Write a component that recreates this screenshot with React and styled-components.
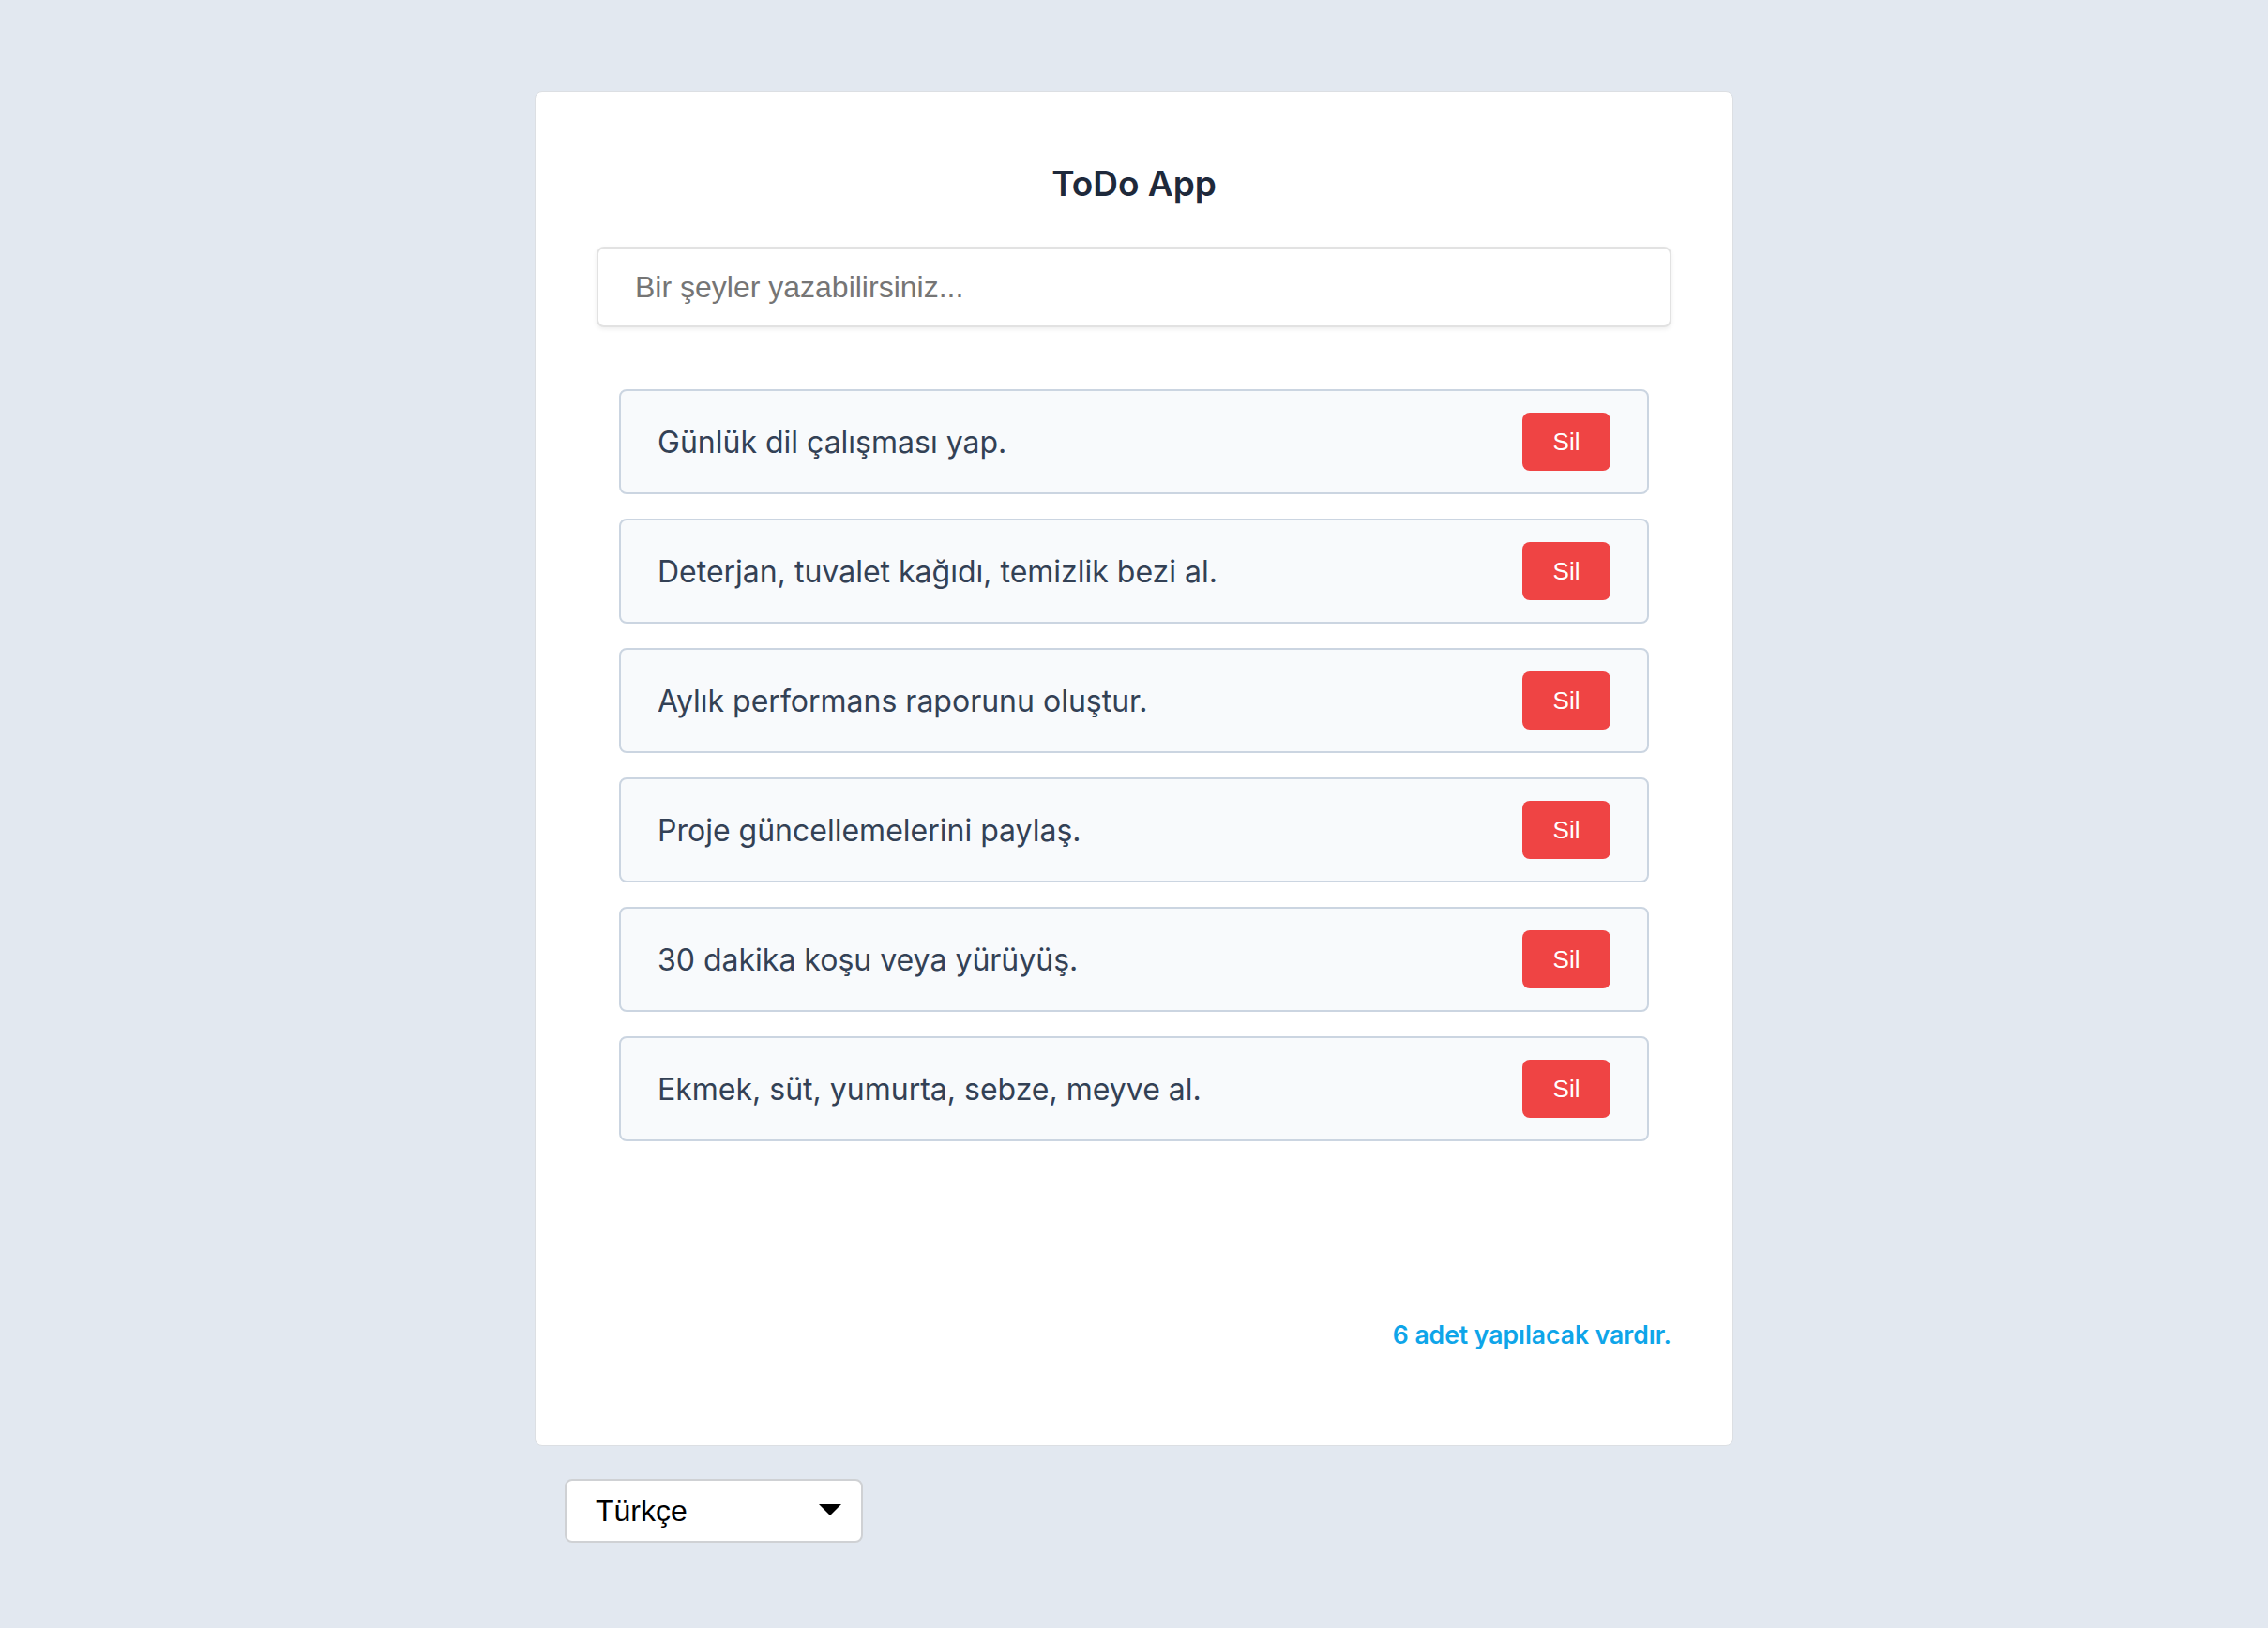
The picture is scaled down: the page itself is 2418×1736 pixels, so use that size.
import React, { useState } from 'react';
import styled, { createGlobalStyle } from 'styled-components';

const GlobalStyle = createGlobalStyle`
  body {
    margin: 0;
    background: #e2e8f0;
    font-family: Inter, "Noto Sans", sans-serif;
  }
`;

const Page = styled.div`
  min-height: 100vh;
  padding: 97px 0 40px;
  box-sizing: border-box;
`;

const Card = styled.div`
  width: 1278px;
  margin: 0 auto;
  box-sizing: border-box;
  background: #ffffff;
  border: 1px solid #dcdfe3;
  border-radius: 8px;
  padding: 75px 65px 102px;
`;

const Title = styled.h1`
  margin: 0;
  text-align: center;
  font-family: Inter, sans-serif;
  font-weight: 600;
  font-size: 37px;
  line-height: 45px;
  color: #1e293b;
`;

const TodoInput = styled.input`
  display: block;
  width: 100%;
  height: 86px;
  margin-top: 45px;
  box-sizing: border-box;
  padding: 0 39px;
  border: 2px solid #e2e2e2;
  border-radius: 8px;
  box-shadow: 0 2px 5px rgba(0, 0, 0, 0.07);
  font-family: "Liberation Sans", Arial, sans-serif;
  font-size: 32px;
  color: #333;
  outline: none;

  &::placeholder {
    color: #757575;
  }
`;

const List = styled.ul`
  list-style: none;
  margin: 66px 24px 0;
  padding: 0;
  display: flex;
  flex-direction: column;
  gap: 26px;
`;

const Item = styled.li`
  height: 112px;
  box-sizing: border-box;
  display: flex;
  align-items: center;
  justify-content: space-between;
  padding: 0 39px;
  background: #f8fafc;
  border: 2px solid #cbd5e1;
  border-radius: 8px;
`;

const ItemText = styled.span`
  font-family: Inter, sans-serif;
  font-size: 32px;
  color: #334155;
`;

const DeleteButton = styled.button`
  width: 94px;
  height: 62px;
  border: none;
  border-radius: 8px;
  background: #ef4444;
  color: #ffffff;
  font-family: "Liberation Sans", Arial, sans-serif;
  font-size: 26px;
  cursor: pointer;
`;

const Count = styled.p`
  margin: 190px 0 0;
  text-align: right;
  font-family: Inter, sans-serif;
  font-weight: 600;
  font-size: 26.5px;
  line-height: 32px;
  color: #0ea5e9;
`;

const Footer = styled.div`
  width: 1278px;
  margin: 35px auto 0;
`;

const SelectBox = styled.div`
  position: relative;
  width: 318px;
  height: 68px;
  margin-left: 32px;
`;

const LangSelect = styled.select`
  appearance: none;
  width: 100%;
  height: 100%;
  box-sizing: border-box;
  padding: 0 31px;
  background: #ffffff;
  border: 2px solid #cfd1d4;
  border-radius: 8px;
  font-family: "Liberation Sans", Arial, sans-serif;
  font-size: 32px;
  color: #000;
  outline: none;
`;

const Caret = styled.svg`
  position: absolute;
  right: 23px;
  top: 27px;
  pointer-events: none;
`;

const initialTodos = [
  'Günlük dil çalışması yap.',
  'Deterjan, tuvalet kağıdı, temizlik bezi al.',
  'Aylık performans raporunu oluştur.',
  'Proje güncellemelerini paylaş.',
  '30 dakika koşu veya yürüyüş.',
  'Ekmek, süt, yumurta, sebze, meyve al.',
];

const App = () => {
  const [todos, setTodos] = useState(initialTodos);
  const [text, setText] = useState('');
  const [lang, setLang] = useState('tr');

  const addTodo = (e) => {
    if (e.key === 'Enter' && text.trim()) {
      setTodos([...todos, text.trim()]);
      setText('');
    }
  };

  return (
    <>
      <GlobalStyle />
      <Page>
        <Card>
          <Title>ToDo App</Title>
          <TodoInput
            placeholder="Bir şeyler yazabilirsiniz..."
            value={text}
            onChange={e => setText(e.target.value)}
            onKeyDown={addTodo}
          />
          <List>
            {todos.map((todo, i) => (
              <Item key={i}>
                <ItemText>{todo}</ItemText>
                <DeleteButton onClick={() => setTodos(todos.filter((_, j) => j !== i))}>Sil</DeleteButton>
              </Item>
            ))}
          </List>
          <Count>{todos.length} adet yapılacak vardır.</Count>
        </Card>
        <Footer>
          <SelectBox>
            <LangSelect value={lang} onChange={e => setLang(e.target.value)}>
              <option value="tr">Türkçe</option>
              <option value="en">English</option>
            </LangSelect>
            <Caret width="24" height="13" viewBox="0 0 24 13">
              <path d="M0 0 H24 L12 12 Z" fill="#000" />
            </Caret>
          </SelectBox>
        </Footer>
      </Page>
    </>
  );
};

export default App;
